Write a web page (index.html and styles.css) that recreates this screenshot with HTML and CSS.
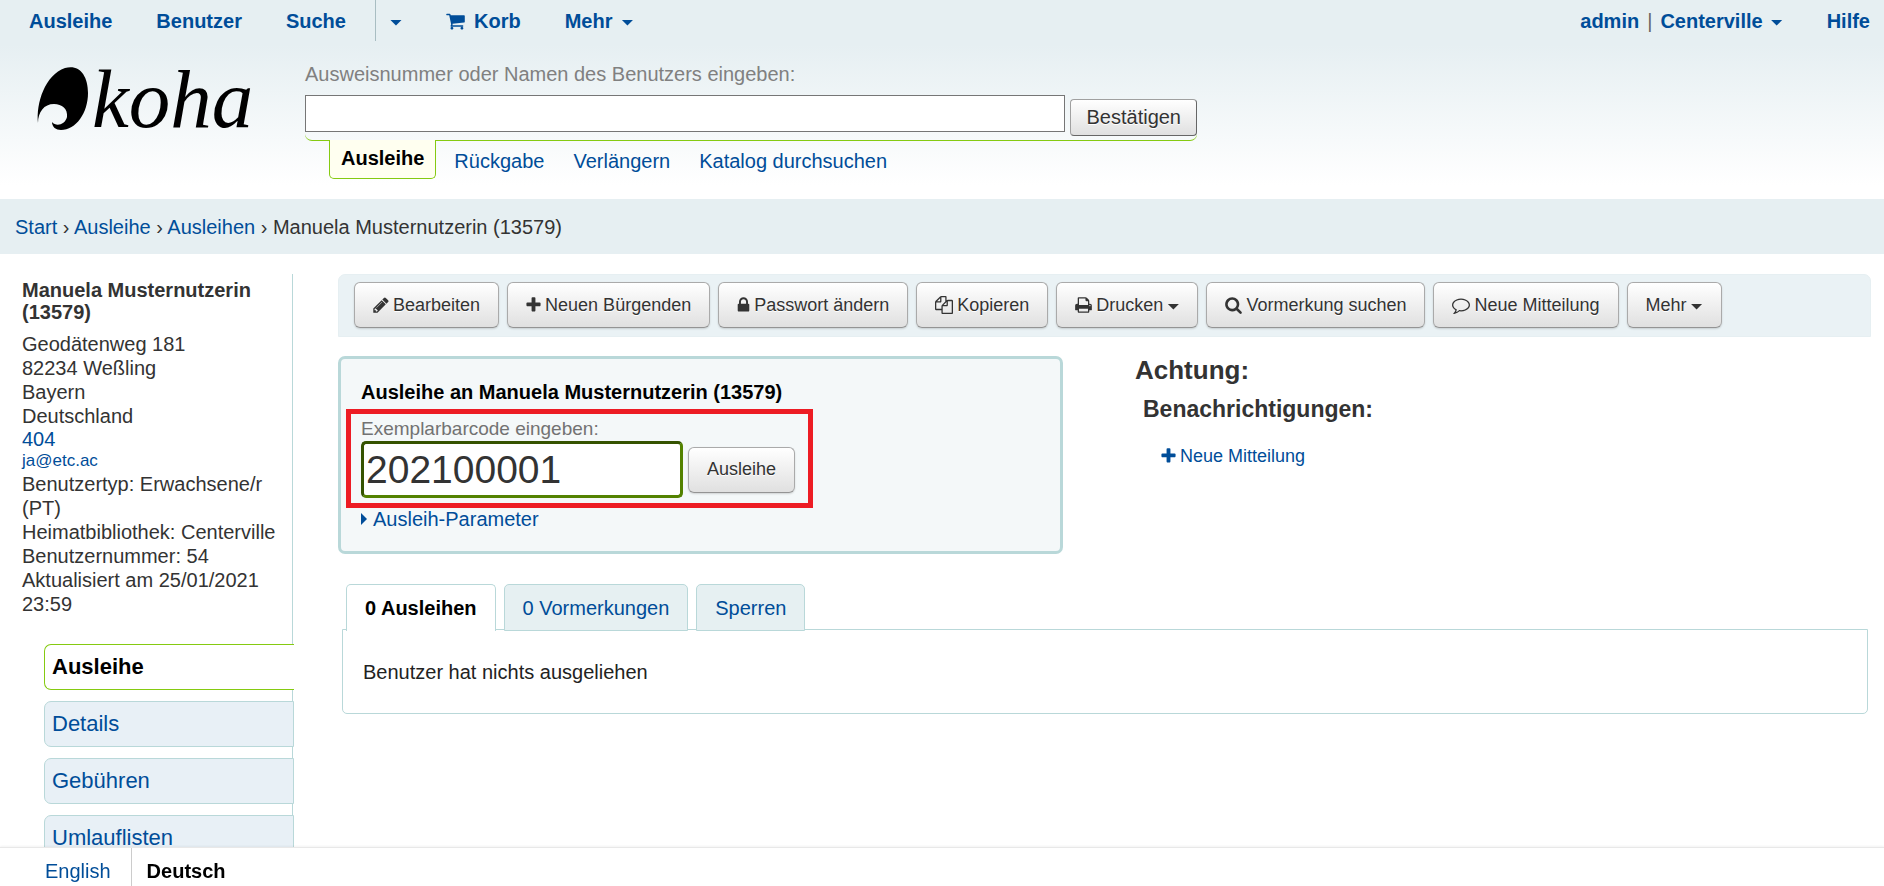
FILE: index.html
```html
<!DOCTYPE html>
<html lang="de">
<head>
<meta charset="utf-8">
<title>Koha › Ausleihe › Manuela Musternutzerin</title>
<link rel="stylesheet" href="styles.css">
</head>
<body>
<svg class="sprite" aria-hidden="true">
  <symbol id="pencil" viewBox="128 0 1536 1792"><path d="M491 1536l91-91-235-235-91 91v107h128v128h107zm523-928q0-22-22-22-10 0-17 7l-542 542q-7 7-7 17 0 22 22 22 10 0 17-7l542-542q7-7 7-17zm-54-192l416 416-832 832h-416v-416zm683 96q0 53-37 90l-166 166-416-416 166-165q36-38 90-38 53 0 91 38l235 234q37 39 37 91z"/></symbol>
  <symbol id="plus" viewBox="192 0 1408 1792"><path d="M1600 736v192q0 40-28 68t-68 28h-416v416q0 40-28 68t-68 28h-192q-40 0-68-28t-28-68v-416h-416q-40 0-68-28t-28-68v-192q0-40 28-68t68-28h416v-416q0-40 28-68t68-28h192q40 0 68 28t28 68v416h416q40 0 68 28t28 68z"/></symbol>
  <symbol id="lock" viewBox="320 0 1152 1792"><path d="M640 768h512v-192q0-106-75-181t-181-75-181 75-75 181v192zm832 96v576q0 40-28 68t-68 28h-960q-40 0-68-28t-28-68v-576q0-40 28-68t68-28h32v-192q0-184 132-316t316-132 316 132 132 316v192h32q40 0 68 28t28 68z"/></symbol>
  <symbol id="files" viewBox="0 0 1792 1792"><path d="M1696 384q40 0 68 28t28 68v1216q0 40-28 68t-68 28h-960q-40 0-68-28t-28-68v-288h-544q-40 0-68-28t-28-68v-672q0-40 20-88t48-76l408-408q28-28 76-48t88-20h416q40 0 68 28t28 68v328q68-40 128-40h416zm-544 213l-299 299h299v-299zm-640-384l-299 299h299v-299zm196 647l316-316v-416h-384v416q0 40-28 68t-68 28h-416v640h512v-256q0-40 20-88t48-76zm956 804v-1152h-384v416q0 40-28 68t-68 28h-416v640h896z"/></symbol>
  <symbol id="print" viewBox="64 0 1664 1792"><path d="M448 1536h896v-256h-896v256zm0-640h896v-384h-160q-40 0-68-28t-28-68v-160h-640v640zm1152 64q0-26-19-45t-45-19-45 19-19 45 19 45 45 19 45-19 19-45zm128 0v416q0 13-9.5 22.5t-22.5 9.5h-224v160q0 40-28 68t-68 28h-960q-40 0-68-28t-28-68v-160h-224q-13 0-22.500-9.500t-9.500-22.500v-416q0-79 56.500-135.500t135.500-56.500h64v-544q0-40 28-68t68-28h672q40 0 88 20t76 48l152 152q28 28 48 76t20 88v256h64q79 0 135.500 56.500t56.500 135.500z"/></symbol>
  <symbol id="search" viewBox="64 0 1664 1792"><path d="M1216 832q0-185-131.500-316.500t-316.500-131.500-316.500 131.500-131.500 316.500 131.500 316.500 316.500 131.500 316.500-131.500 131.500-316.500zm512 832q0 52-38 90t-90 38q-54 0-90-38l-343-342q-179 124-399 124-143 0-273.500-55.500t-225-150-150-225-55.500-273.500 55.500-273.500 150-225 225-150 273.500-55.500 273.500 55.500 225 150 150 225 55.500 273.500q0 220-124 399l343 343q37 37 37 90z"/></symbol>
  <symbol id="comment" viewBox="0 0 1792 1792"><path d="M896 384q-204 0-381.500 69.500t-282 187.500-104.500 255q0 112 71.500 213.500t201.500 175.500l87 50-27 96q-24 91-70 172 152-63 275-171l43-38 57 6q69 8 130 8 204 0 381.500-69.500t282-187.500 104.500-255-104.500-255-282-187.500-381.500-69.500zm896 512q0 174-120 321.500t-326 233-450 85.500q-70 0-145-8-198 175-460 242-49 14-114 22h-5q-15 0-27-10.500t-16-27.500v-1q-3-4-.5-12t2-10 4.500-9.500l6-9 7-8.500 8-9q7-8 31-34.500t34.500-38 31-39.500 32.500-51 27-59 26-76q-157-89-247.500-220t-90.500-281q0-174 120-321.500t326-233 450-85.500 450 85.500 326 233 120 321.500z"/></symbol>
  <symbol id="cart" viewBox="64 0 1664 1792"><path d="M704 1536q0 52-38 90t-90 38-90-38-38-90 38-90 90-38 90 38 38 90zm896 0q0 52-38 90t-90 38-90-38-38-90 38-90 90-38 90 38 38 90zm128-1088v512q0 24-16.500 42.500t-40.500 21.500l-1044 122q13 60 13 70 0 16-24 64h920q26 0 45 19t19 45-19 45-45 19h-1024q-26 0-45-19t-19-45q0-11 8-31.500t16-36 21.500-40 15.500-29.500l-177-823h-204q-26 0-45-19t-19-45 19-45 45-19h256q16 0 28.500 6.500t19.500 15.500 13 24.500 8 26 5.500 29.500 4.500 26h1201q26 0 45 19t19 45z"/></symbol>
</svg>

<div class="masthead">
  <nav class="topnav">
    <div class="topnav-group">
      <a href="#">Ausleihe</a>
      <a href="#">Benutzer</a>
      <div class="split">
        <a href="#">Suche</a>
        <a class="split-toggle" href="#" aria-label="Weitere Suchen"><span class="caret"></span></a>
      </div>
      <a class="with-icon" href="#"><svg class="icon icon-cart"><use href="#cart"/></svg>Korb</a>
      <a class="with-caret" href="#">Mehr<span class="caret"></span></a>
    </div>
    <div class="topnav-group">
      <a class="account" href="#"><span>admin</span><span class="pipe">|</span><span>Centerville</span><span class="caret"></span></a>
      <a href="#">Hilfe</a>
    </div>
  </nav>

  <header class="header">
    <a class="logo" href="#" aria-label="Koha">
      <svg class="logo-art" viewBox="0 0 220 66">
        <path d="M1 57C-1 37 8 9 28 2C42-2 51 9 51 27C51 47 39 64 24 64C19 64 15 61 15 56C19 61 28 59 30 51C31 43 25 38 17 38C7 38 1 46 1 57Z"/>
        <text class="logo-text" x="55" y="61">koha</text>
      </svg>
    </a>
    <div class="searchbox">
      <form class="search-form">
        <label class="search-label" for="patron-search">Ausweisnummer oder Namen des Benutzers eingeben:</label>
        <div class="search-row">
          <input class="search-input" id="patron-search" type="text">
          <button class="btn btn-submit" type="submit">Bestätigen</button>
        </div>
      </form>
      <div class="search-tabs">
        <a class="search-tab active" href="#">Ausleihe</a>
        <a class="search-tab" href="#">Rückgabe</a>
        <a class="search-tab" href="#">Verlängern</a>
        <a class="search-tab" href="#">Katalog durchsuchen</a>
      </div>
    </div>
  </header>
</div>

<nav class="breadcrumbs"><a href="#">Start</a> › <a href="#">Ausleihe</a> › <a href="#">Ausleihen</a> › Manuela Musternutzerin (13579)</nav>

<div class="page">
  <aside class="sidebar">
    <div class="patron">
      <h5 class="patron-name">Manuela Musternutzerin (13579)</h5>
      <ul class="patron-info">
        <li>Geodätenweg 181</li>
        <li>82234 Weßling</li>
        <li>Bayern</li>
        <li>Deutschland</li>
        <li class="contact"><a href="#">404</a></li>
        <li class="contact email"><a href="#">ja@etc.ac</a></li>
        <li>Benutzertyp: Erwachsene/r (PT)</li>
        <li>Heimatbibliothek: Centerville</li>
        <li>Benutzernummer: 54</li>
        <li>Aktualisiert am 25/01/2021 23:59</li>
      </ul>
    </div>
    <nav class="menu">
      <a class="menu-item active" href="#">Ausleihe</a>
      <a class="menu-item" href="#">Details</a>
      <a class="menu-item" href="#">Gebühren</a>
      <a class="menu-item" href="#">Umlauflisten</a>
    </nav>
  </aside>

  <main class="main">
    <div class="toolbar">
      <button class="btn" type="button"><svg class="icon icon-pencil"><use href="#pencil"/></svg>Bearbeiten</button>
      <button class="btn" type="button"><svg class="icon icon-plus"><use href="#plus"/></svg>Neuen Bürgenden</button>
      <button class="btn" type="button"><svg class="icon icon-lock"><use href="#lock"/></svg>Passwort ändern</button>
      <button class="btn" type="button"><svg class="icon"><use href="#files"/></svg>Kopieren</button>
      <button class="btn" type="button"><svg class="icon icon-wide"><use href="#print"/></svg>Drucken<span class="caret"></span></button>
      <button class="btn" type="button"><svg class="icon icon-wide"><use href="#search"/></svg>Vormerkung suchen</button>
      <button class="btn" type="button"><svg class="icon"><use href="#comment"/></svg>Neue Mitteilung</button>
      <button class="btn" type="button">Mehr<span class="caret"></span></button>
    </div>

    <div class="columns">
      <form class="checkout">
        <h3 class="checkout-title">Ausleihe an Manuela Musternutzerin (13579)</h3>
        <div class="highlight">
          <label class="barcode-label" for="barcode">Exemplarbarcode eingeben:</label>
          <div class="barcode-row">
            <input class="barcode" id="barcode" type="text" value="202100001">
            <button class="btn" type="submit">Ausleihe</button>
          </div>
        </div>
        <a class="params" href="#"><span class="triangle"></span>Ausleih-Parameter</a>
      </form>
      <section class="messages">
        <h3 class="attention">Achtung:</h3>
        <h4 class="notices">Benachrichtigungen:</h4>
        <a class="new-message" href="#"><svg class="icon icon-plus"><use href="#plus"/></svg>Neue Mitteilung</a>
      </section>
    </div>

    <section class="tabs">
      <div class="tablist">
        <a class="tab active" href="#">0 Ausleihen</a>
        <a class="tab" href="#">0 Vormerkungen</a>
        <a class="tab" href="#">Sperren</a>
      </div>
      <div class="panel">Benutzer hat nichts ausgeliehen</div>
    </section>
  </main>
</div>

<footer class="languages">
  <a class="language" href="#">English</a>
  <span class="language current">Deutsch</span>
</footer>
</body>
</html>
```
FILE: styles.css
```css
* { box-sizing: border-box; }

body {
  margin: 0;
  background: #fff;
  color: #333;
  font-family: "Liberation Sans", Arial, sans-serif;
  font-size: 20px;
  line-height: 24px;
}

a { color: #004d99; text-decoration: none; }
h3, h4, h5, ul { margin: 0; padding: 0; }
ul { list-style: none; }

.sprite { display: none; }

.icon {
  width: 18px;
  height: 18px;
  flex: none;
  fill: currentColor;
}
.icon-pencil { width: 16px; }
.icon-plus { width: 15px; }
.icon-lock { width: 13px; }
.icon-wide { width: 17px; }
.icon-cart { width: 19px; height: 20px; }

.caret {
  width: 12px;
  height: 6px;
  flex: none;
  background: currentColor;
  clip-path: polygon(0 0, 100% 0, 50% 100%);
}

.masthead {
  height: 199px;
  background: linear-gradient(#e6eff2 45px, #fff 185px);
}

/* Top navigation */
.topnav {
  display: flex;
  justify-content: space-between;
  height: 41px;
  padding: 0 14px 0 29px;
  font-weight: bold;
}
.topnav-group,
.topnav-group > a,
.split,
.split-toggle {
  display: flex;
  align-items: center;
}
.topnav-group { gap: 44px; }
.topnav .split { align-self: stretch; gap: 29px; }
.split-toggle {
  align-self: stretch;
  padding-left: 14px;
  border-left: 1px solid #a8bdc2;
}
.topnav .with-icon,
.topnav .with-caret { gap: 9px; }
.topnav .account { gap: 8px; }
.topnav .caret { margin-top: 4px; }
.pipe { color: #666; font-weight: normal; }

/* Logo and search */
.header { display: flex; padding-left: 37px; }
.logo { width: 268px; padding-top: 25px; }
.logo-art { display: block; width: 220px; height: 66px; overflow: visible; }
.logo-text {
  font-family: "Liberation Serif", "Times New Roman", serif;
  font-style: italic;
  font-size: 83px;
}
.searchbox { width: 892px; padding-top: 21px; }
.search-form {
  padding-bottom: 4px;
  border-bottom: 1px solid #85ca11;
  border-radius: 0 0 7px 7px;
}
.search-label { display: block; color: #808080; }
.search-row { display: flex; align-items: flex-end; gap: 5px; padding-top: 9px; }
.search-input {
  flex: 1;
  min-width: 0;
  height: 37px;
  margin-bottom: 4px;
  border: 1px solid #767676;
  background: #fff;
  font: inherit;
}
.search-tabs { display: flex; margin-top: -1px; padding-left: 24px; }
.search-tab { padding: 9px 11px 0 18px; }
.search-tab.active {
  height: 39px;
  padding: 6px 11px 0;
  border: 1px solid #85ca11;
  border-top: 0;
  border-radius: 0 0 5px 5px;
  background: #fffff0;
  color: #000;
  font-weight: bold;
}

.btn {
  display: flex;
  align-items: center;
  gap: 4px;
  height: 46px;
  padding: 0 18px;
  border: 1px solid #aaa;
  border-bottom-color: #949494;
  border-radius: 6px;
  background: linear-gradient(#fff, #e0e0e0);
  box-shadow: 0 1px 2px rgba(0, 0, 0, 0.15);
  color: #333;
  font-family: inherit;
  font-size: 18px;
  text-shadow: 0 1px 0 #fff;
  white-space: nowrap;
}
.btn .caret { margin-top: 3px; }
.btn-submit {
  height: 37px;
  padding: 0 15px;
  border-color: #a0a0a0 #666 #666 #a0a0a0;
  border-radius: 4px;
  box-shadow: none;
  font-size: 20px;
}

.breadcrumbs {
  padding: 16px 15px 15px;
  background: #e6eff2;
}

.page { display: grid; grid-template-columns: 293px minmax(0, 1fr); padding-top: 20px; }

/* Sidebar */
.sidebar { border-right: 1px solid #b9d8d9; }
.patron { padding: 5px 16px 0 22px; }
.patron-name { padding-bottom: 9px; font-size: 20px; line-height: 22px; }
.contact { line-height: 22px; }
.email { font-size: 17px; }
.menu {
  display: flex;
  flex-direction: column;
  gap: 11px;
  margin: 28px -2px 0 44px;
}
.menu-item {
  height: 46px;
  padding: 11px 7px;
  border: 1px solid #b9d8d9;
  border-radius: 7px 0 0 7px;
  background: #e8f0f6;
  font-size: 22px;
  line-height: 22px;
}
.menu-item.active {
  border-color: #85ca11;
  border-right: 0;
  background: #fff;
  color: #000;
  font-weight: bold;
}

/* Main column */
.main { padding: 0 13px 0 45px; }
.toolbar {
  display: flex;
  gap: 8px;
  height: 63px;
  padding: 7px 15px;
  border: 1px solid #e6eff2;
  border-radius: 7px 7px 0 0;
  background: #eaf2f5;
}
.columns {
  display: grid;
  grid-template-columns: 725px minmax(0, 1fr);
  column-gap: 72px;
  margin-top: 19px;
}
.checkout {
  height: 198px;
  padding: 21px 20px 0;
  border: 3px solid #b9d8d9;
  border-radius: 7px;
  background: #f4f8f9;
}
.checkout-title { color: #000; font-size: 20px; }
.highlight {
  width: fit-content;
  margin: 5px 0 0 -15px;
  padding: 3px 13px 5px 10px;
  border: 5px solid #ed1c24;
}
.barcode-label { display: block; color: #727272; font-size: 19px; }
.barcode-row { display: flex; align-items: center; gap: 5px; }
.barcode {
  width: 322px;
  height: 57px;
  padding: 0 2px;
  border: 3px solid #538200;
  border-color: #355300 #538200 #538200 #355300;
  border-radius: 5px;
  background: #fff;
  color: #333;
  font: 39px "Liberation Sans", Arial, sans-serif;
}
.params { display: flex; align-items: center; gap: 6px; line-height: 22px; }
.triangle {
  width: 6px;
  height: 12px;
  background: currentColor;
  clip-path: polygon(0 0, 100% 50%, 0 100%);
}

.attention { font-size: 26px; line-height: 28px; }
.notices { padding: 11px 0 0 8px; font-size: 23px; line-height: 28px; }
.new-message {
  display: flex;
  align-items: center;
  gap: 4px;
  padding: 21px 0 0 26px;
  font-size: 18px;
}

.tabs { margin: 30px 3px 0 4px; }
.tablist {
  display: flex;
  align-items: flex-start;
  gap: 8px;
  height: 45px;
  padding-left: 4px;
}
.tab {
  position: relative;
  height: 47px;
  padding: 11px 18px;
  border: 1px solid #b9d8d9;
  border-radius: 5px 5px 0 0;
  background: #e6f0f2;
}
.tab.active { border-bottom: 0; background: #fff; color: #000; font-weight: bold; }
.panel {
  padding: 30px 20px 29px;
  border: 1px solid #b9d8d9;
  border-radius: 0 0 5px 5px;
  color: #222;
}

/* Language bar */
.languages {
  position: fixed;
  right: 0;
  bottom: 0;
  left: 0;
  display: flex;
  height: 39px;
  padding-left: 30px;
  border-top: 1px solid #e8e8e8;
  background: #fff;
  box-shadow: 0 -1px 2px rgba(0, 0, 0, 0.05);
}
.language { padding: 11px 20px 0 15px; }
.language + .language { border-left: 1px solid #ccc; }
.current { color: #000; font-weight: bold; }
```
